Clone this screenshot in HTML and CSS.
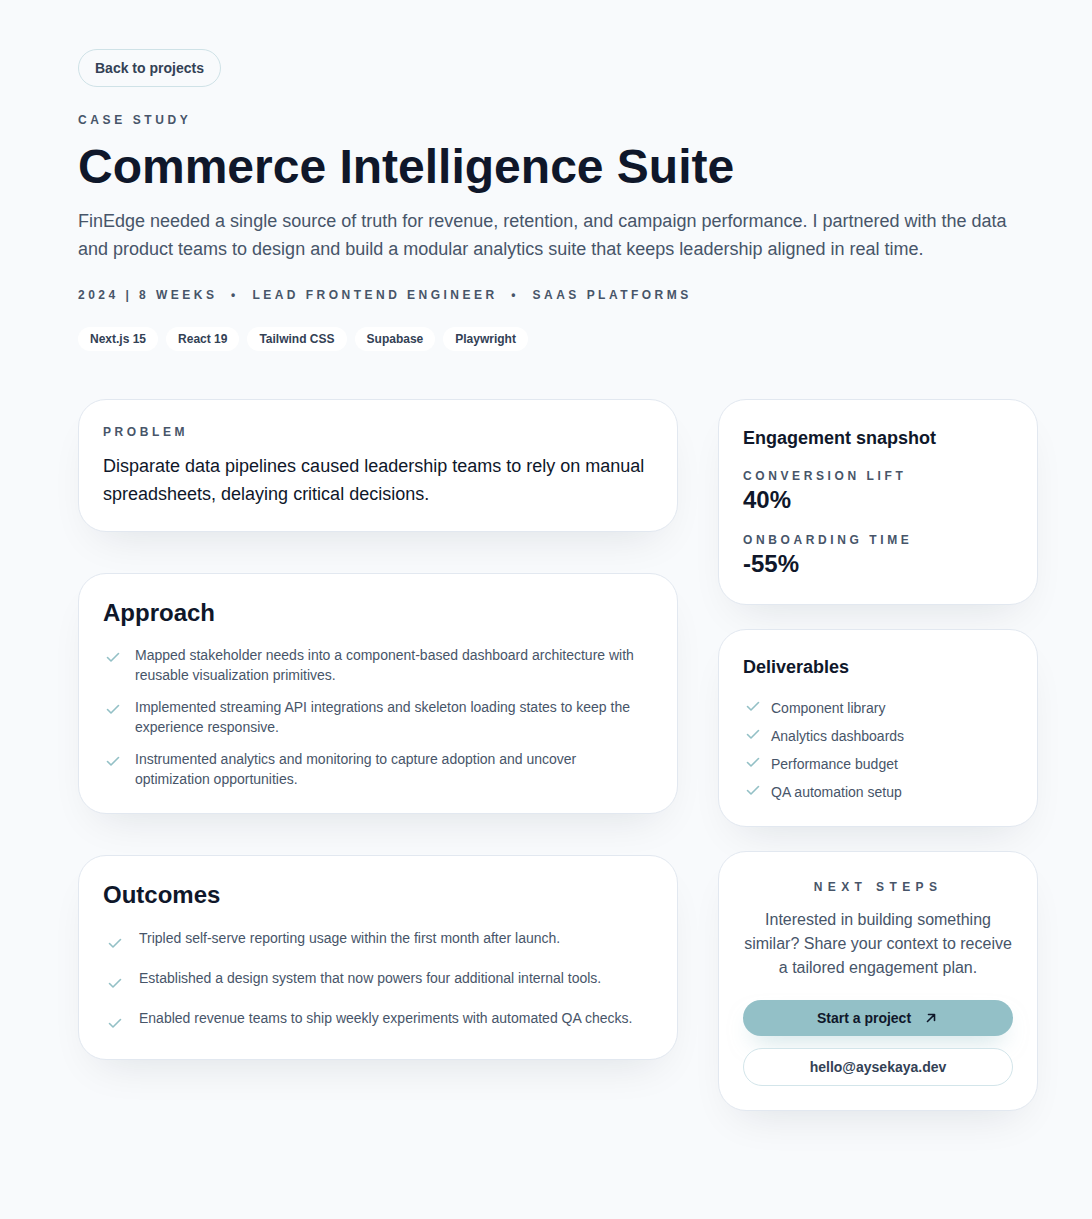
FILE: index.html
```html
<!DOCTYPE html>
<html lang="en">
<head>
<meta charset="utf-8">
<title>Commerce Intelligence Suite</title>
<link rel="stylesheet" href="styles.css">
</head>
<body>
<main class="page">
  <a class="back" href="#">Back to projects</a>
  <p class="eyebrow">Case study</p>
  <h1 class="title">Commerce Intelligence Suite</h1>
  <p class="lede">FinEdge needed a single source of truth for revenue, retention, and campaign performance. I partnered with the data and product teams to design and build a modular analytics suite that keeps leadership aligned in real time.</p>
  <p class="meta">2024 | 8 weeks &nbsp;•&nbsp; Lead Frontend Engineer &nbsp;•&nbsp; SaaS Platforms</p>
  <ul class="tags">
    <li>Next.js 15</li>
    <li>React 19</li>
    <li>Tailwind CSS</li>
    <li>Supabase</li>
    <li>Playwright</li>
  </ul>

  <div class="grid">
    <div class="main-col">
      <section class="card problem">
        <p class="label">Problem</p>
        <p class="problem-text">Disparate data pipelines caused leadership teams to rely on manual spreadsheets, delaying critical decisions.</p>
      </section>

      <section class="card approach-card">
        <h2 class="card-title">Approach</h2>
        <ul class="checks approach">
          <li><svg class="chk" viewBox="0 0 16 16"><path d="M2.5 8.5l3.5 3.5 7.5-7.5"/></svg><span>Mapped stakeholder needs into a component-based dashboard architecture with reusable visualization primitives.</span></li>
          <li><svg class="chk" viewBox="0 0 16 16"><path d="M2.5 8.5l3.5 3.5 7.5-7.5"/></svg><span>Implemented streaming API integrations and skeleton loading states to keep the experience responsive.</span></li>
          <li><svg class="chk" viewBox="0 0 16 16"><path d="M2.5 8.5l3.5 3.5 7.5-7.5"/></svg><span>Instrumented analytics and monitoring to capture adoption and uncover optimization opportunities.</span></li>
        </ul>
      </section>

      <section class="card outcomes-card">
        <h2 class="card-title">Outcomes</h2>
        <ul class="checks outcomes">
          <li><svg class="chk" viewBox="0 0 16 16"><path d="M2.5 8.5l3.5 3.5 7.5-7.5"/></svg><span>Tripled self-serve reporting usage within the first month after launch.</span></li>
          <li><svg class="chk" viewBox="0 0 16 16"><path d="M2.5 8.5l3.5 3.5 7.5-7.5"/></svg><span>Established a design system that now powers four additional internal tools.</span></li>
          <li><svg class="chk" viewBox="0 0 16 16"><path d="M2.5 8.5l3.5 3.5 7.5-7.5"/></svg><span>Enabled revenue teams to ship weekly experiments with automated QA checks.</span></li>
        </ul>
      </section>
    </div>

    <aside class="side-col">
      <section class="card side">
        <h3 class="side-title">Engagement snapshot</h3>
        <div class="stat">
          <p class="label">Conversion lift</p>
          <p class="stat-value">40%</p>
        </div>
        <div class="stat">
          <p class="label">Onboarding time</p>
          <p class="stat-value">-55%</p>
        </div>
      </section>

      <section class="card side deliv-card">
        <h3 class="side-title">Deliverables</h3>
        <ul class="deliv">
          <li><svg class="chk" viewBox="0 0 16 16"><path d="M2.5 8.5l3.5 3.5 7.5-7.5"/></svg><span>Component library</span></li>
          <li><svg class="chk" viewBox="0 0 16 16"><path d="M2.5 8.5l3.5 3.5 7.5-7.5"/></svg><span>Analytics dashboards</span></li>
          <li><svg class="chk" viewBox="0 0 16 16"><path d="M2.5 8.5l3.5 3.5 7.5-7.5"/></svg><span>Performance budget</span></li>
          <li><svg class="chk" viewBox="0 0 16 16"><path d="M2.5 8.5l3.5 3.5 7.5-7.5"/></svg><span>QA automation setup</span></li>
        </ul>
      </section>

      <section class="card side next">
        <p class="label center">Next steps</p>
        <p class="next-text">Interested in building something similar? Share your context to receive a tailored engagement plan.</p>
        <a class="btn primary" href="#">Start a project <svg class="arrow" viewBox="0 0 16 16"><path d="M4.5 11.5l7-7M5.5 4.5h6v6"/></svg></a>
        <a class="btn ghost" href="#">hello@aysekaya.dev</a>
      </section>
    </aside>
  </div>
</main>
</body>
</html>
```

FILE: styles.css
```css
* { box-sizing: border-box; }
html, body { margin: 0; padding: 0; }
body {
  background: #f8fafc;
  font-family: "Liberation Sans", Arial, sans-serif;
  color: #0f172a;
}
p, h1, h2, h3, ul { margin: 0; padding: 0; }
ul { list-style: none; }
a { text-decoration: none; }

.page {
  width: 960px;
  margin: 0 54px 0 78px;
  padding: 49px 0 109px;
}

.back {
  display: inline-block;
  height: 38px;
  line-height: 36px;
  padding: 0 16px;
  border: 1px solid #cfe2e7;
  border-radius: 999px;
  font-size: 14px;
  font-weight: 700;
  color: #334155;
}

.eyebrow {
  margin-top: 25px;
  font-size: 12px;
  font-weight: 700;
  letter-spacing: 0.3em;
  text-transform: uppercase;
  color: #475569;
  line-height: 16px;
}

.title {
  margin-top: 11px;
  font-size: 48px;
  line-height: 56px;
  font-weight: 700;
  color: #0f172a;
}

.lede {
  margin-top: 12px;
  font-size: 18px;
  line-height: 28px;
  color: #475569;
  max-width: 940px;
}

.meta {
  margin-top: 24px;
  font-size: 12px;
  line-height: 16px;
  font-weight: 700;
  letter-spacing: 0.29em;
  text-transform: uppercase;
  color: #475569;
}

.tags {
  display: flex;
  gap: 8px;
  margin-top: 24px;
}
.tags li {
  height: 24px;
  line-height: 24px;
  padding: 0 12px;
  background: #ffffff;
  border-radius: 999px;
  font-size: 12px;
  font-weight: 700;
  color: #334155;
}

.grid {
  display: grid;
  grid-template-columns: 600px 320px;
  gap: 40px;
  margin-top: 48px;
  align-items: start;
}
.main-col { display: flex; flex-direction: column; gap: 41px; }
.side-col { display: flex; flex-direction: column; gap: 24px; }

.card {
  background: #ffffff;
  border: 1px solid #e2e8f0;
  border-radius: 28px;
  padding: 24px;
  box-shadow: 0 20px 45px -20px rgba(15, 23, 42, 0.12);
}

.label {
  font-size: 12px;
  line-height: 16px;
  font-weight: 700;
  letter-spacing: 0.3em;
  text-transform: uppercase;
  color: #475569;
}
.label.center { text-align: center; letter-spacing: 0.45em; }

.problem { padding: 24px 24px 23px; }
.problem-text {
  margin-top: 12px;
  font-size: 18px;
  line-height: 28px;
  color: #0f172a;
}

.card-title {
  font-size: 24px;
  line-height: 32px;
  font-weight: 700;
  color: #0f172a;
}
.approach-card { padding: 23px 24px 24px; }
.outcomes-card { padding: 23px 24px 28px; }

.checks li {
  display: flex;
  align-items: flex-start;
  font-size: 14px;
  line-height: 20px;
  color: #475569;
}
.chk {
  flex: none;
  width: 16px;
  height: 16px;
  fill: none;
  stroke: #93c0c6;
  stroke-width: 1.6;
  stroke-linecap: round;
  stroke-linejoin: round;
}
.approach { margin-top: 16px; display: flex; flex-direction: column; gap: 12px; }
.approach .chk { margin: 4px 14px 0 2px; }
.outcomes { margin-top: 17px; display: flex; flex-direction: column; gap: 17px; }
.outcomes .chk { margin: 7px 16px 0 4px; }

.side { padding: 24px 24px 26px; }
.side-title {
  font-size: 18px;
  line-height: 28px;
  font-weight: 700;
  color: #0f172a;
}
.stat { margin-top: 16px; }
.stat + .stat { margin-top: 18px; }
.stat-value {
  margin-top: 2px;
  font-size: 24px;
  line-height: 28px;
  font-weight: 700;
  color: #0f172a;
}
.side.deliv-card { padding: 23px 24px 24px; }

.deliv { margin-top: 17px; display: flex; flex-direction: column; gap: 8px; }
.deliv li {
  display: flex;
  align-items: center;
  font-size: 14px;
  line-height: 20px;
  color: #475569;
}
.deliv .chk { margin: -4px 10px 0 2px; }

.side.next { padding: 27px 24px 24px; text-align: center; }
.next-text {
  margin-top: 13px;
  font-size: 16px;
  line-height: 24px;
  color: #475569;
}
.btn {
  display: flex;
  align-items: center;
  justify-content: center;
  gap: 8px;
  height: 36px;
  border-radius: 999px;
  font-size: 14px;
  font-weight: 700;
}
.primary {
  margin-top: 20px;
  background: #93c0c7;
  color: #0f172a;
  box-shadow: 0 12px 24px -10px rgba(147, 192, 199, 0.6);
}
.arrow {
  width: 16px;
  height: 16px;
  margin-left: 4px;
  fill: none;
  stroke: #0f172a;
  stroke-width: 1.6;
  stroke-linecap: round;
  stroke-linejoin: round;
}
.ghost {
  margin-top: 12px;
  height: 38px;
  border: 1px solid #d3e5ea;
  color: #334155;
  background: #ffffff;
}
```
